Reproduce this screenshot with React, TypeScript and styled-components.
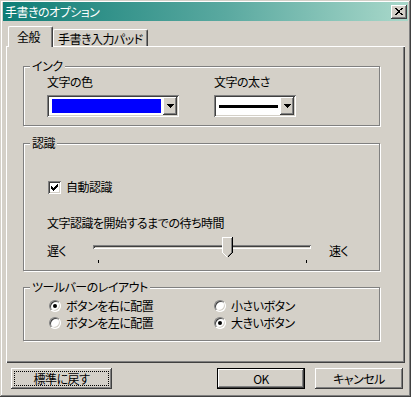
import React from 'react';
import styled, { createGlobalStyle, css } from 'styled-components';

const FACE = '#d4d0c8';
const SHADOW = '#808080';
const DARK = '#404040';
const LIGHT = '#ffffff';

const GlobalStyle = createGlobalStyle`
  html, body {
    margin: 0;
    padding: 0;
    background: ${FACE};
  }
  body {
    font-family: "Noto Sans CJK JP", "Liberation Sans", sans-serif;
    font-size: 12px;
    color: #000;
  }
  * {
    box-sizing: border-box;
  }
`;

// classic 3D edges
const raised = css`
  box-shadow: inset -1px -1px ${DARK}, inset 1px 1px ${LIGHT}, inset -2px -2px ${SHADOW}, inset 2px 2px ${FACE};
`;

const sunken = css`
  box-shadow: inset 1px 1px ${SHADOW}, inset -1px -1px ${LIGHT}, inset 2px 2px ${DARK}, inset -2px -2px ${FACE};
`;

const Window = styled.div`
  width: 411px;
  height: 397px;
  display: flex;
  flex-direction: column;
  padding: 2px 3px 3px;
  background: ${FACE};
  box-shadow: inset -1px -1px ${DARK}, inset 1px 1px ${FACE}, inset -2px -2px ${SHADOW}, inset 2px 2px ${LIGHT};
  font-feature-settings: "palt" 1;
  font-variant-east-asian: proportional-width;
  letter-spacing: -0.5px;
  line-height: 14px;
`;

const TitleBar = styled.div`
  height: 19px;
  display: flex;
  align-items: center;
  justify-content: space-between;
  padding: 0 1px 0 2px;
  background: linear-gradient(90deg, #0f7d76 0%, #5aa9a0 55%, #a9d8ca 100%);
  color: #fff;
  font-size: 12px;
  line-height: 19px;
`;

const CloseButton = styled.div`
  width: 16px;
  height: 14px;
  display: flex;
  align-items: center;
  justify-content: center;
  background: ${FACE};
  ${raised}
`;

const Content = styled.div`
  flex: 1;
  display: flex;
  flex-direction: column;
  padding: 3px 3px 0;
`;

const TabStrip = styled.div`
  height: 22px;
  display: flex;
  align-items: flex-end;
  padding-left: 2px;
  position: relative;
  z-index: 1;
`;

const Tab = styled.div<{ $active?: boolean; $width: number }>`
  width: ${({ $width }) => $width}px;
  height: ${({ $active }) => ($active ? '21px' : '17px')};
  margin-bottom: ${({ $active }) => ($active ? '-1px' : '0')};
  line-height: ${({ $active }) => ($active ? '20px' : '17px')};
  padding-left: ${({ $active }) => ($active ? '8px' : '4px')};
  background: ${FACE};
  border-top: 1px solid ${LIGHT};
  border-left: 1px solid ${LIGHT};
  border-right: 1px solid ${DARK};
  border-radius: 2px 2px 0 0;
  box-shadow: inset -1px 0 ${SHADOW};
  white-space: nowrap;
  overflow: hidden;
`;

const Panel = styled.div`
  height: 317px;
  display: flex;
  flex-direction: column;
  padding: 20px 25px 0 17px;
  background: ${FACE};
  box-shadow: inset 1px 1px ${LIGHT}, inset -1px -1px ${DARK}, inset -2px -2px ${SHADOW};
`;

const GroupBox = styled.div<{ $height: number; $gap?: number }>`
  height: ${({ $height }) => $height}px;
  margin-top: ${({ $gap }) => $gap ?? 0}px;
  display: flex;
  flex-direction: column;
  border: 1px solid ${SHADOW};
  box-shadow: inset 1px 1px ${LIGHT}, 1px 1px ${LIGHT};
`;

const Caption = styled.div`
  align-self: flex-start;
  margin: -8px 0 0 6px;
  padding: 0 2px;
  background: ${FACE};
  line-height: 14px;
`;

/* インク */
const InkGrid = styled.div`
  display: grid;
  grid-template-columns: 167px auto;
  padding: 2px 0 0 23px;
`;

const Field = styled.div`
  display: flex;
  flex-direction: column;
  align-items: flex-start;
  gap: 6px;
`;

const Combo = styled.div<{ $width: number }>`
  width: ${({ $width }) => $width}px;
  height: 22px;
  display: flex;
  padding: 2px;
  background: #fff;
  ${sunken}
`;

const ComboValue = styled.div`
  flex: 1;
  display: flex;
  align-items: center;
  padding: 2px 2px 2px 3px;
`;

const ColorSwatch = styled.div<{ $color: string }>`
  width: 100%;
  height: 100%;
  background: ${({ $color }) => $color};
`;

const PenLine = styled.div<{ $weight: number }>`
  width: 100%;
  height: ${({ $weight }) => $weight}px;
  background: #000;
`;

const ComboButton = styled.div`
  width: 14px;
  display: flex;
  align-items: center;
  justify-content: center;
  background: ${FACE};
  ${raised}
`;

/* 認識 */
const CheckRow = styled.label`
  display: flex;
  align-items: center;
  gap: 5px;
  height: 14px;
  margin: 30px 0 0 24px;
`;

const CheckBox = styled.span`
  width: 13px;
  height: 13px;
  display: flex;
  align-items: center;
  justify-content: center;
  background: #fff;
  ${sunken}
`;

const Text = styled.div<{ $top: number }>`
  margin: ${({ $top }) => $top}px 0 0 23px;
  height: 14px;
`;

const SliderRow = styled.div`
  display: flex;
  align-items: flex-start;
  margin: 7px 0 0 23px;
`;

const SliderLabel = styled.span<{ $width?: number }>`
  width: ${({ $width }) => ($width ? `${$width}px` : 'auto')};
  margin-top: 7px;
`;

const Slider = styled.div`
  position: relative;
  width: 218px;
  height: 27px;
  margin-right: 18px;
`;

const Track = styled.div`
  margin-top: 8px;
  height: 4px;
  ${sunken}
`;

const Thumb = styled.svg`
  position: absolute;
  top: 0;
`;

const Tick = styled.span`
  position: absolute;
  top: 23px;
  width: 1px;
  height: 3px;
  background: #000;
`;

/* ツールバー */
const RadioGrid = styled.div`
  display: grid;
  grid-template-columns: 165px auto;
  row-gap: 3px;
  padding: 5px 0 0 25px;
`;

const RadioItem = styled.label`
  display: flex;
  align-items: center;
  gap: 5px;
  height: 14px;
`;

const RadioCircle = styled.span<{ $checked?: boolean }>`
  width: 12px;
  height: 12px;
  display: flex;
  align-items: center;
  justify-content: center;
  border-radius: 50%;
  border: 1px solid;
  border-color: ${SHADOW} ${LIGHT} ${LIGHT} ${SHADOW};
  background: #fff;
  box-shadow: inset 1px 1px ${DARK}, inset -1px -1px ${FACE};

  &::after {
    content: '';
    width: 4px;
    height: 4px;
    border-radius: 50%;
    background: #000;
    display: ${({ $checked }) => ($checked ? 'block' : 'none')};
  }
`;

/* ボタン */
const ButtonRow = styled.div`
  height: 21px;
  display: flex;
  gap: 10px;
  margin-top: 5px;
  padding: 0 2px 0 5px;
`;

const Button = styled.button<{ $width: number; $default?: boolean; $pushRight?: boolean }>`
  width: ${({ $width }) => $width}px;
  height: 21px;
  margin: 0;
  margin-left: ${({ $pushRight }) => ($pushRight ? 'auto' : '0')};
  padding: 3px;
  display: flex;
  font: inherit;
  letter-spacing: inherit;
  font-feature-settings: inherit;
  color: #000;
  background: ${FACE};
  border: ${({ $default }) => ($default ? '1px solid #000' : 'none')};
  ${raised}
`;

const ButtonLabel = styled.span<{ $focused?: boolean }>`
  flex: 1;
  display: flex;
  align-items: center;
  justify-content: center;
  border: 1px dotted ${({ $focused }) => ($focused ? '#000' : 'transparent')};
`;

const CloseGlyph = () => (
  <svg width="8" height="7" viewBox="0 0 8 7" shapeRendering="crispEdges">
    {[
      [0, 0], [6, 0], [1, 1], [5, 1], [2, 2], [3, 3], [2, 4], [1, 5], [5, 5], [0, 6], [6, 6],
    ].map(([x, y]) => (
      <rect key={`${x}-${y}`} x={x} y={y} width={2} height={1} fill="#000" />
    ))}
    <rect x={4} y={2} width={1} height={1} fill="#000" />
    <rect x={4} y={4} width={1} height={1} fill="#000" />
  </svg>
);

const ArrowGlyph = () => (
  <svg width="7" height="4" viewBox="0 0 7 4" shapeRendering="crispEdges">
    <rect x={0} y={0} width={7} height={1} fill="#000" />
    <rect x={1} y={1} width={5} height={1} fill="#000" />
    <rect x={2} y={2} width={3} height={1} fill="#000" />
    <rect x={3} y={3} width={1} height={1} fill="#000" />
  </svg>
);

const CheckGlyph = () => (
  <svg width="7" height="7" viewBox="0 0 7 7" shapeRendering="crispEdges">
    {[2, 3, 4, 3, 2, 1, 0].map((y, x) => (
      <rect key={x} x={x} y={y} width={1} height={3} fill="#000" />
    ))}
  </svg>
);

const ThumbGlyph = ({ left }: { left: number }) => (
  <Thumb width="11" height="21" viewBox="0 0 11 21" style={{ left }} shapeRendering="crispEdges">
    <polygon points="0,0 11,0 11,16 5.5,21 0,16" fill={FACE} />
    <path d="M0.5 15.5 V0.5 H10" stroke={LIGHT} fill="none" />
    <path d="M0.5 15.5 L5 20" stroke={LIGHT} fill="none" />
    <path d="M9.5 1 V15.5 L5.5 19.5" stroke={SHADOW} fill="none" />
    <path d="M10.5 0 V15.5 L5.5 20.5" stroke="#000" fill="none" />
  </Thumb>
);

const delay = 0.62;

export default function App() {
  const thumbLeft = Math.round(delay * 208);

  return (
    <>
      <GlobalStyle />
      <Window>
        <TitleBar>
          <span>手書きのオプション</span>
          <CloseButton>
            <CloseGlyph />
          </CloseButton>
        </TitleBar>

        <Content>
          <TabStrip>
            <Tab $active $width={45}>全般</Tab>
            <Tab $width={95}>手書き入力パッド</Tab>
          </TabStrip>

          <Panel>
            <GroupBox $height={60}>
              <Caption>インク</Caption>
              <InkGrid>
                <Field>
                  <span>文字の色</span>
                  <Combo $width={132}>
                    <ComboValue>
                      <ColorSwatch $color="#0000ff" />
                    </ComboValue>
                    <ComboButton>
                      <ArrowGlyph />
                    </ComboButton>
                  </Combo>
                </Field>
                <Field>
                  <span>文字の太さ</span>
                  <Combo $width={82}>
                    <ComboValue>
                      <PenLine $weight={3} />
                    </ComboValue>
                    <ComboButton>
                      <ArrowGlyph />
                    </ComboButton>
                  </Combo>
                </Field>
              </InkGrid>
            </GroupBox>

            <GroupBox $height={128} $gap={17}>
              <Caption>認識</Caption>
              <CheckRow>
                <CheckBox>
                  <CheckGlyph />
                </CheckBox>
                自動認識
              </CheckRow>
              <Text $top={22}>文字認識を開始するまでの待ち時間</Text>
              <SliderRow>
                <SliderLabel $width={46}>遅く</SliderLabel>
                <Slider>
                  <Track />
                  <ThumbGlyph left={thumbLeft} />
                  <Tick style={{ left: 5 }} />
                  <Tick style={{ left: 213 }} />
                </Slider>
                <SliderLabel>速く</SliderLabel>
              </SliderRow>
            </GroupBox>

            <GroupBox $height={54} $gap={16}>
              <Caption>ツールバーのレイアウト</Caption>
              <RadioGrid>
                <RadioItem>
                  <RadioCircle $checked />
                  ボタンを右に配置
                </RadioItem>
                <RadioItem>
                  <RadioCircle />
                  小さいボタン
                </RadioItem>
                <RadioItem>
                  <RadioCircle />
                  ボタンを左に配置
                </RadioItem>
                <RadioItem>
                  <RadioCircle $checked />
                  大きいボタン
                </RadioItem>
              </RadioGrid>
            </GroupBox>
          </Panel>

          <ButtonRow>
            <Button $width={101}>
              <ButtonLabel $focused>標準に戻す</ButtonLabel>
            </Button>
            <Button $width={88} $default $pushRight>
              <ButtonLabel>OK</ButtonLabel>
            </Button>
            <Button $width={88}>
              <ButtonLabel>キャンセル</ButtonLabel>
            </Button>
          </ButtonRow>
        </Content>
      </Window>
    </>
  );
}
